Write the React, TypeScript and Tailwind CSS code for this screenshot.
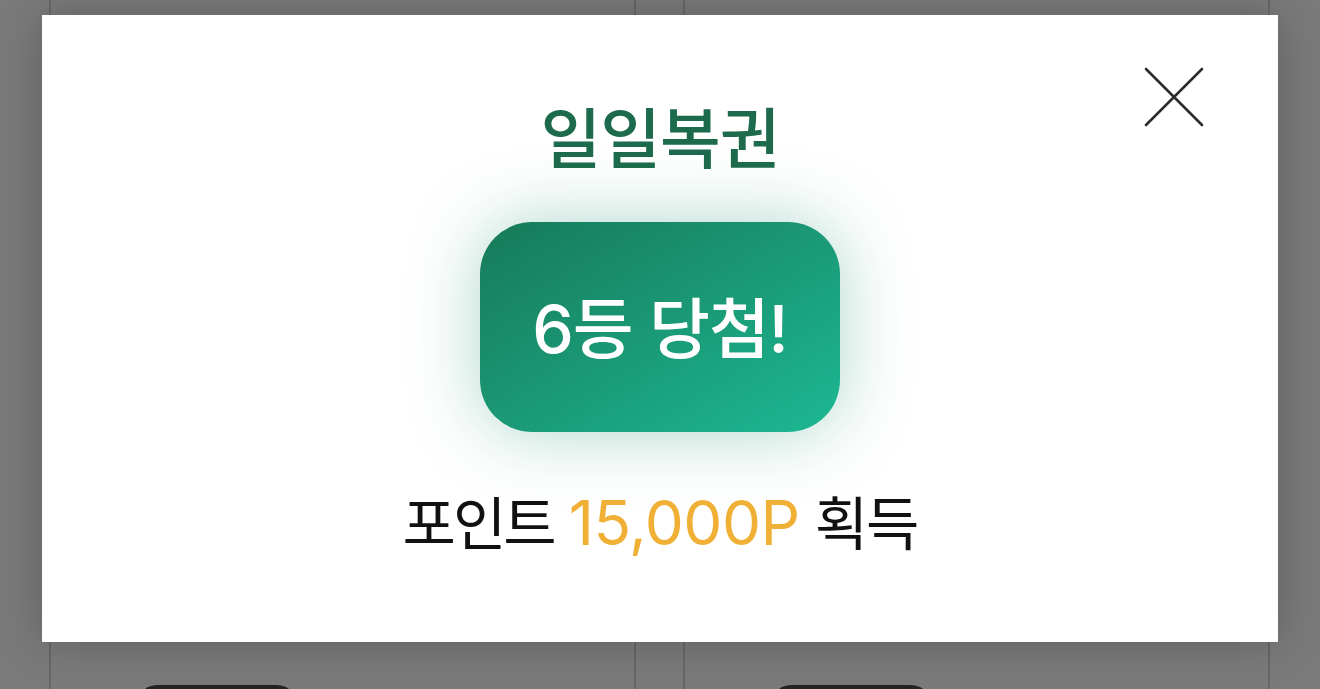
const font = "font-['Inter','Noto_Sans_CJK_KR',sans-serif]";

function BackgroundCard() {
  return (
    <div className="relative h-full w-[587px] border-x-2 border-[#676767]">
      <div className="absolute left-[86px] top-[685px] h-[40px] w-[160px] rounded-full bg-[#222222]" />
    </div>
  );
}

export default function App() {
  return (
    <div className={`relative h-[689px] w-[1320px] overflow-hidden bg-[#7a7a7a] ${font}`}>
      <div className="flex h-full gap-[47px] pl-[49px]">
        <BackgroundCard />
        <BackgroundCard />
      </div>

      <div className="absolute inset-0 flex justify-center pt-[15px]">
        <div className="relative flex h-[627px] w-[1236px] flex-col items-center bg-white shadow-[0_0_40px_rgba(0,0,0,0.22)]">
          <button type="button" className="absolute left-[1101px] top-[51px] text-[#2c2c2c]">
            <svg width="62" height="62" viewBox="0 0 62 62" fill="none" stroke="currentColor" strokeWidth="2.6" strokeLinecap="round">
              <path d="M3 3L59 59M59 3L3 59" />
            </svg>
          </button>

          <h2 className="mt-[91px] text-[66px] font-medium leading-none tracking-[-1px] text-[#1d6b4c]">
            일일복권
          </h2>

          <div className="mt-[50px] flex h-[210px] w-[360px] items-center justify-center rounded-[52px] bg-gradient-to-br from-[#177a59] to-[#1cb893] shadow-[0_0_70px_rgba(24,140,110,0.35)]">
            <span className="mt-[4px] text-[66px] font-medium leading-none tracking-[-1px] text-white">6등 당첨!</span>
          </div>

          <p className="mt-[60px] flex items-baseline gap-[15px] text-[58px] leading-none text-[#111111]">
            <span className="tracking-[-3px]">포인트</span>
            <span className="text-[62px] font-normal tracking-[-0.5px] text-[#efb035]">15,000P</span>
            <span className="tracking-[-2px]">획득</span>
          </p>
        </div>
      </div>
    </div>
  );
}
